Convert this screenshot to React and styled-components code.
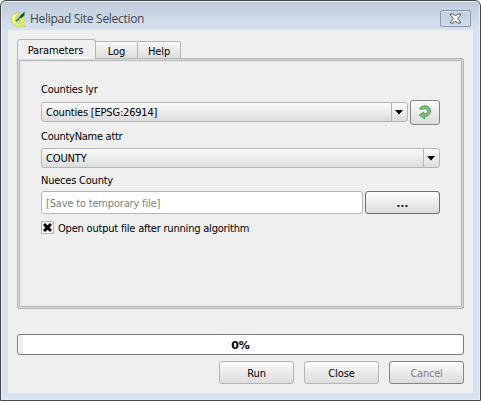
import React from "react";
import styled, { createGlobalStyle, css } from "styled-components";

const Global = createGlobalStyle`
  *{box-sizing:border-box}
  html,body{margin:0;padding:0;background:#fff;overflow:hidden}
  button,input{margin:0;font:inherit}
`;

const Dialog = styled.div`
  width:481px;height:401px;display:flex;flex-direction:column;
  border:1px solid #4a4749;border-radius:6px 6px 0 0;padding:0 7px 7px;
  background:linear-gradient(#bfcbd9,#d7e3f0 30px);
  box-shadow:inset 0 0 0 1px #e3ecf6;
  font:11px/14px "DejaVu Sans Condensed","DejaVu Sans",sans-serif;font-stretch:condensed;color:#000;
`;
const TitleBar = styled.header`
  height:29px;flex:none;display:flex;align-items:center;padding:6px 2px 0 3px;
`;
const Title = styled.h1`
  margin:0 auto 0 3px;font:400 12px/16px "Open Sans",sans-serif;color:#42464e;letter-spacing:-.29px;white-space:nowrap;
`;
const CloseBox = styled.button`
  width:31px;height:17px;padding:0;border:1px solid #8595ae;border-radius:2px;
  background:linear-gradient(#c3cfdd,#cfdbe8);box-shadow:inset 0 0 0 1px #d5dfeb;
  display:flex;align-items:center;justify-content:center;
`;
const Body = styled.main`
  flex:1;background:#efefef;padding:9px 9px 0;display:flex;flex-direction:column;
`;
const Tabs = styled.nav`
  display:flex;align-items:flex-end;height:20px;margin-bottom:-1px;position:relative;
`;
const Tab = styled.div`
  width:${p => p.$w}px;height:17px;margin-bottom:1px;border:solid #b5b5b5;border-width:1px 1px 0 0;border-radius:0 2px 0 0;
  background:linear-gradient(#f8f8f8,#dedede);text-align:center;line-height:19px;
  ${p => p.$active && css`
    height:20px;margin:0;border-width:1px 1px 0 1px;border-radius:3px 3px 0 0;background:#efefef;line-height:22px;padding-right:2px;
  `}
`;
const Panel = styled.section`
  height:251px;border:1px solid #b5b5b5;box-shadow:inset 0 0 0 1px #dadada,inset 0 0 0 2px #bcbcbc,inset 0 0 0 3px #e6e6e6;
  border-radius:2px;padding:24px 23px 0;
`;
const Text = styled.span`
  letter-spacing:${p => p.$ls ?? -0.22}px;white-space:nowrap;
`;
const Percent = styled.span`
  font:700 11px/14px "DejaVu Sans",sans-serif;font-stretch:normal;padding-top:2px;
`;
const Label = styled.div`height:14px;margin-top:${p => p.$top || 0}px;`;
const Row = styled.div`
  display:flex;align-items:center;gap:${p => p.$gap || 0}px;margin-top:${p => p.$top || 0}px;
`;
const Combo = styled.div`
  flex:1;height:20px;margin-bottom:1px;border:1px solid #b5b5b5;border-radius:3px;background:linear-gradient(#fbfbfb,#dcdcdc);
  display:flex;align-items:flex-start;padding-left:4px;line-height:20px;
`;
const Arrow = styled.span`
  margin-left:auto;width:16px;height:18px;padding-right:1px;border-left:1px solid #b5b5b5;display:flex;align-items:center;justify-content:center;
`;
const Button = styled.button`
  width:${p => p.$w || 75}px;height:${p => p.$h || 23}px;padding:${p => p.$pad || "2px 0 0"};
  border:1px solid ${p => p.$edge || "#b5b5b5"};border-radius:3px;
  background:linear-gradient(#fcfcfc,#dcdcdc);color:${p => (p.disabled ? "#808080" : "#000")};
  display:flex;align-items:center;justify-content:center;
`;
const Dots = styled.span`
  font-weight:700;letter-spacing:.2px;padding-top:1px;
`;
const Field = styled.div`
  flex:1;height:23px;border:1px solid #b5b5b5;border-radius:3px;background:#fff;color:#808080;
  padding-left:4px;line-height:23px;
`;
const CheckRow = styled.label`
  display:flex;align-items:flex-start;height:13px;line-height:15px;margin-top:7px;gap:4px;
`;
const Check = styled.span`
  width:13px;height:13px;border:1px solid #b5b5b5;background:#fff;display:flex;align-items:center;justify-content:center;
`;
const Progress = styled.div`
  height:21px;margin-top:25px;border:1px solid #7b7b7b;border-radius:3px;
  display:flex;align-items:center;justify-content:center;
  background:linear-gradient(#efefef,#efefef) 1px 1px/4px 17px no-repeat,#fff;
`;
const Footer = styled.footer`display:flex;justify-content:flex-end;gap:10px;margin-top:6px;`;

const Logo = () => (
  <svg width="16" height="16" viewBox="1 0.500 14 14.500">
    <path d="M7 2C3 2 1 5 1 8.500S3 14 6 14l4 1 2-1-2-3-3 1-2-3 1-4 3-3z" fill="#e4ee62" stroke="#c3cf5c" strokeWidth=".6" />
    <path d="M8 8l4-3c1.500 2 1 5-.5 7l2.500 2.500-3 0-2-3z" fill="#e4ee62" stroke="#c3cf5c" strokeWidth=".6" />
    <path d="M4 4L2.800 8 4 11.500" stroke="#fdffdc" fill="none" />
    <path d="M5 9.500l2-1 4-5" stroke="#2f8a2c" strokeWidth="1.500" fill="none" />
    <path d="M8.500 6L13 1v3.500L10 7z" fill="#0f5f17" />
  </svg>
);
const Cross = () => (
  <svg width="13" height="11" viewBox="0 0 13 11">
    <path d="M1.500 1h3l2 2 2-2h3v1L8.600 5.500l2.900 3.500v1h-3l-2-2-2 2h-3V9l2.900-3.500L1.500 2z" fill="#fff" stroke="#4d5461" />
  </svg>
);
const DownArrow = () => (
  <svg width="8" height="5" viewBox="0 0 8 5"><path d="M0 0h8L4 4.500z" fill="#000" /></svg>
);
const CheckMark = () => (
  <svg width="9" height="9" viewBox="0 0 9 9"><path d="M1 1l7 7M8 1L1 8" stroke="#000" strokeWidth="3" /></svg>
);
const Refresh = () => (
  <svg width="14" height="15" viewBox="0 0 14 15">
    <path
      d="M1.500 4C2.500 1.500 5 .7 7.500.8c3 .2 5 2.300 5 5.200 0 3.500-2.500 5.500-6 5.700l.3 2.300L1.200 10l4.600-3 .2 2c2.200 0 3.500-1 3.500-2.700C9.500 4.500 8.300 3.500 7 3.500c-1 0-1.700.3-2.200 1z"
      fill="#7cc274" stroke="#479b49" strokeWidth=".9"
    />
  </svg>
);

export default function App() {
  return (
    <>
      <Global />
      <Dialog>
        <TitleBar>
          <Logo />
          <Title>Helipad Site Selection</Title>
          <CloseBox aria-label="Close window"><Cross /></CloseBox>
        </TitleBar>
        <Body>
          <Tabs>
            <Tab $active $w={79}><Text $ls={-0.1}>Parameters</Text></Tab>
            <Tab $w={42}><Text $ls={0}>Log</Text></Tab>
            <Tab $w={43}><Text $ls={-0.1}>Help</Text></Tab>
          </Tabs>
          <Panel>
            <Label><Text>Counties lyr</Text></Label>
            <Row $top={3} $gap={2}>
              <Combo><Text $ls={-0.19}>Counties [EPSG:26914]</Text><Arrow><DownArrow /></Arrow></Combo>
              <Button $w={30} $h={25} $pad="0" $edge="#858585" aria-label="Refresh"><Refresh /></Button>
            </Row>
            <Label $top={5}><Text $ls={-0.27}>CountyName attr</Text></Label>
            <Row $top={4}><Combo><Text $ls={-0.15}>COUNTY</Text><Arrow><DownArrow /></Arrow></Combo></Row>
            <Label $top={5}><Text>Nueces County</Text></Label>
            <Row $top={3} $gap={2}>
              <Field><Text $ls={-0.18}>[Save to temporary file]</Text></Field>
              <Button $edge="#6f6f6f"><Dots>...</Dots></Button>
            </Row>
            <CheckRow><Check><CheckMark /></Check><Text $ls={-0.2}>Open output file after running algorithm</Text></CheckRow>
          </Panel>
          <Progress><Percent>0%</Percent></Progress>
          <Footer>
            <Button><Text $ls={-0.1}>Run</Text></Button>
            <Button><Text $ls={-0.1}>Close</Text></Button>
            <Button disabled $edge="#858585"><Text>Cancel</Text></Button>
          </Footer>
        </Body>
      </Dialog>
    </>
  );
}
